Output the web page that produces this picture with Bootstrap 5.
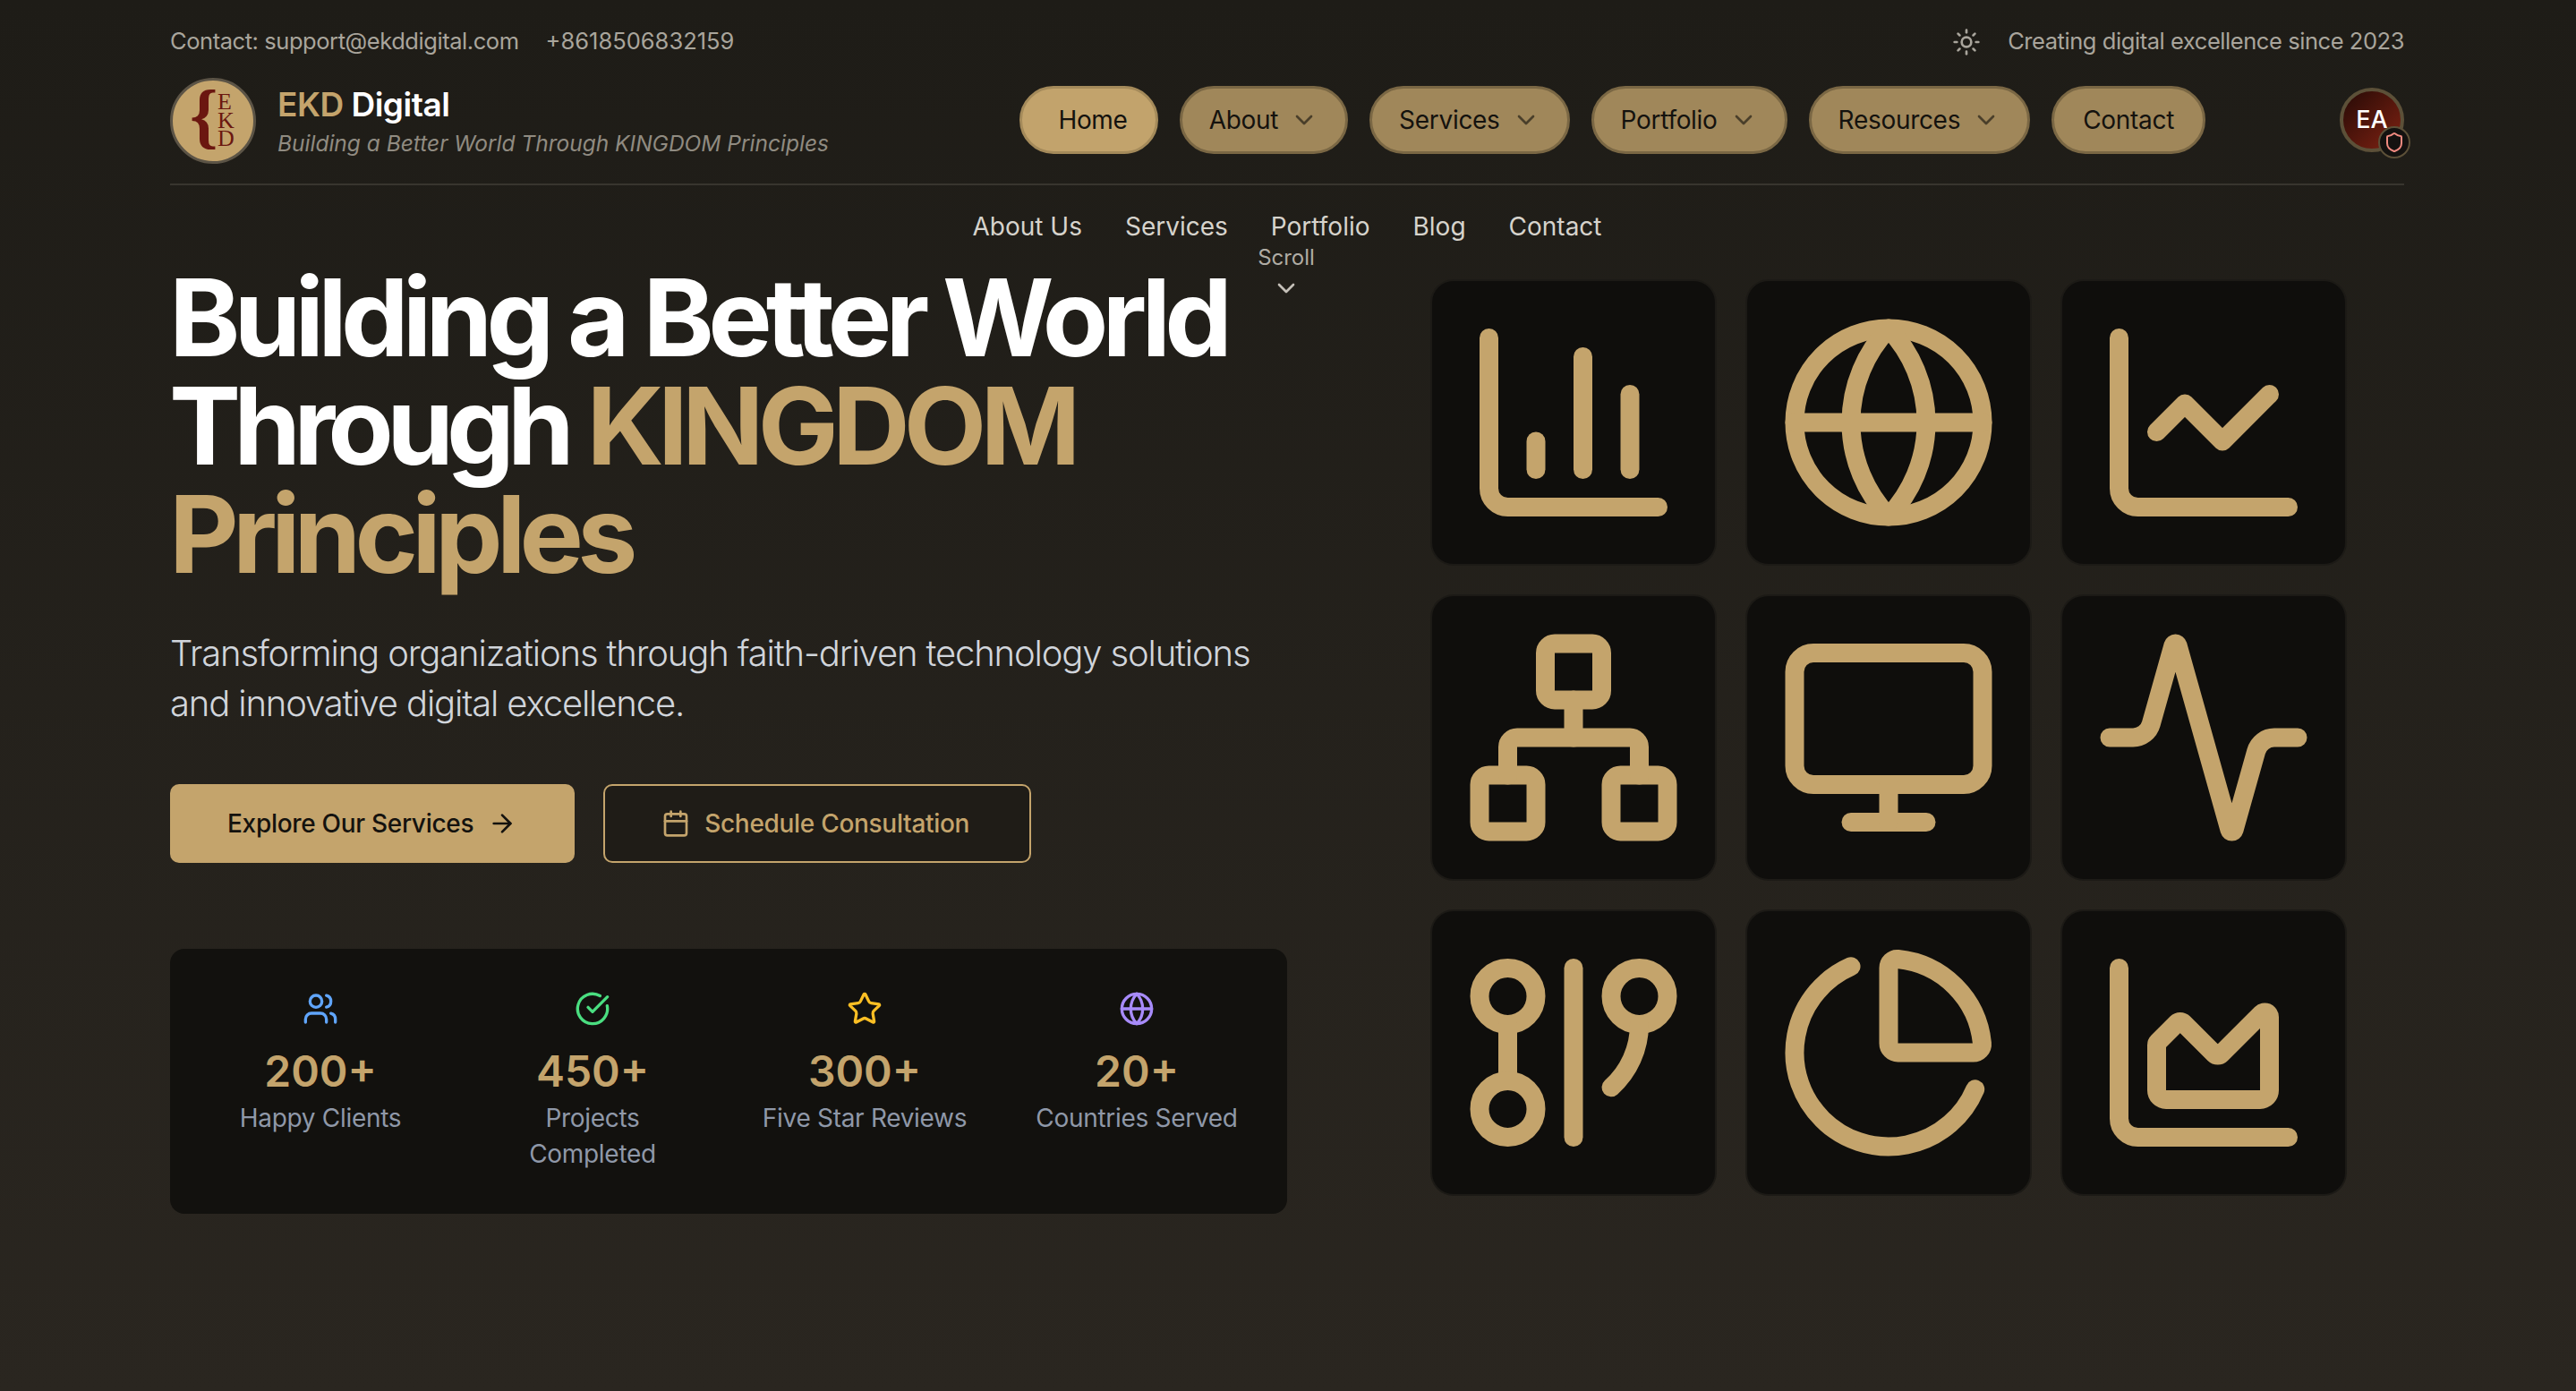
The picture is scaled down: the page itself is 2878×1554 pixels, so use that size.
<!DOCTYPE html>
<html lang="en">
<head>
  <meta charset="UTF-8" />
  <meta name="viewport" content="width=device-width, initial-scale=1.0"/>
  <title>EKD Digital</title>
  <link href="https://cdn.jsdelivr.net/npm/bootstrap@5.3.2/dist/css/bootstrap.min.css" rel="stylesheet"/>
  <style>
    body {
      font-family: Inter, "Liberation Sans", sans-serif;
      background: linear-gradient(180deg, #1e1c17 0%, #2a2620 100%);
      min-height: 1554px;
      color: #fff;
    }
    svg.ico {
      fill: none;
      stroke: currentColor;
      stroke-width: 2;
      stroke-linecap: round;
      stroke-linejoin: round;
      flex-shrink: 0;
    }
    .page-wrap { width: 2496px; margin-left: 190px; position: relative; }
    .top-strip { height: 87px; font-size: 25.5px; color: #a9a59c; padding-top: 6px; }
    .top-strip svg { width: 32px; height: 32px; margin-right: 30px; }
    .tight-txt { letter-spacing: -0.44px; }
    .top-phone { margin-left: 30px; }
    .head-row { height: 120px; border-bottom: 2px solid #38352e; padding-bottom: 24px; }
    .logo-disc { width: 96px; height: 96px; flex-shrink: 0; display: block; overflow: visible; }
    .brand-name { font-size: 37px; font-weight: 600; line-height: 46px; letter-spacing: -0.5px; padding-top: 2px; }
    .brand-name span, .gold-txt { color: #c4a46c; }
    .brand-sub { font-size: 24.5px; font-style: italic; color: #908b81; line-height: 36px; margin-top: 2px; }
    .pill-list { margin-left: auto; margin-right: 150px; margin-top: 9px; gap: 24px; }
    .pill-btn {
      height: 76px; padding: 0 30px; font-size: 28px; letter-spacing: -0.3px; color: #14120e;
      background: #a0875a; border: 3px solid #7a6744; border-radius: 38px; gap: 13px;
    }
    .pill-btn svg { width: 32px; height: 32px; color: #4a3f2a; }
    .pill-btn.is-on { background: #c2a36c; border-color: #a48a5a; padding: 0 31px 0 40px; }
    .pill-btn.pill-end { padding: 0 32px; }
    .avatar-disc {
      width: 72px; height: 72px; border-radius: 50%; border: 4px solid #5c5038; position: relative; margin-top: 11px;
      background: linear-gradient(135deg, #260a06, #7f2212); font-size: 27px; font-weight: 500;
    }
    .shield-dot {
      position: absolute; right: -11px; bottom: -11px; width: 36px; height: 36px; border-radius: 50%;
      background: #141210; border: 2px solid #5c5038; color: #f08a80;
    }
    .shield-dot svg { width: 24px; height: 24px; }
    .sub-links { padding: 26px 0 18px; gap: 48px; font-size: 28px; line-height: 40px; color: #d6d3cc; }
    .scroll-hint {
      position: absolute; left: 1247px; top: 273px; width: 0; font-size: 24px; line-height: 30px; color: #b0aca4;
    }
    .scroll-hint svg { width: 32px; height: 32px; color: #c4c0b8; margin-top: 3px; }
    .hero-row { align-items: center; }
    .hero-left { width: 1248px; }
    .hero-right { width: 1248px; padding-left: 96px; }
    .hero-title { font-size: 120px; line-height: 121px; font-weight: 700; letter-spacing: -6.8px; margin: 3px 0 0 -1px; }
    .word-tight { letter-spacing: -7.8px; }
    .hero-lead { font-size: 40px; line-height: 56px; color: #d1d5db; margin: 45px 0 0; font-weight: 300; letter-spacing: -1.15px; }
    .btn-row { gap: 32px; margin-top: 62px; }
    .cta-solid, .cta-line { height: 88px; font-size: 28px; font-weight: 500; letter-spacing: -0.3px; border-radius: 10px; gap: 16px; }
    .cta-solid { background: #c4a46c; color: #14120e; border: 0; padding: 0 65px 0 64px; }
    .cta-line { background: #1f1c17; color: #c4a46c; border: 2px solid #c4a46c; padding: 0 67px 0 63px; }
    .cta-solid svg { width: 32px; height: 32px; }
    .cta-line svg { width: 32px; height: 32px; }
    .stat-box { background: #12110e; border-radius: 16px; padding: 47px 32px 47px; margin-top: 96px; gap: 32px; }
    .stat-cell { width: 272px; text-align: center; }
    .stat-cell svg { width: 40px; height: 40px; display: block; margin: 0 auto 18px; }
    .stat-num { font-size: 48px; line-height: 64px; font-weight: 600; color: #c4a46c; }
    .stat-lbl { font-size: 28px; line-height: 40px; color: #8f98a8; letter-spacing: -0.3px; }
    .c-blue { color: #60a5fa; } .c-green { color: #4ade80; } .c-yellow { color: #fbbf24; } .c-purple { color: #a78bfa; }
    .icon-grid { display: grid; grid-template-columns: repeat(3, 316px); gap: 36px; }
    .icon-tile { width: 316px; height: 316px; padding: 32px; background: #0f0e0c; border-radius: 24px; color: #c4a46c; box-shadow: 0 0 0 2px #1c1a16; }
    .icon-tile svg { width: 252px; height: 252px; display: block; }
  </style>
</head>
<body>

<div class="page-wrap">
  <div class="top-strip d-flex justify-content-between align-items-center">
    <div><span class="tight-txt">Contact: support@ekddigital.com</span><span class="top-phone">+8618506832159</span></div>
    <div class="d-flex align-items-center">
      <svg class="ico" viewBox="0 0 24 24"><circle cx="12" cy="12" r="4"/><path d="M12 2v2"/><path d="M12 20v2"/><path d="m4.93 4.93 1.41 1.41"/><path d="m17.66 17.66 1.41 1.41"/><path d="M2 12h2"/><path d="M20 12h2"/><path d="m6.34 17.66-1.41 1.41"/><path d="m19.07 4.93-1.41 1.41"/></svg>
      <span class="tight-txt">Creating digital excellence since 2023</span>
    </div>
  </div>

  <div class="head-row d-flex align-items-start">
    <div class="d-flex align-items-center gap-4">
      <svg class="logo-disc" viewBox="0 0 96 96">
        <circle cx="48" cy="48" r="46.5" fill="#c4a46c" stroke="#5c5446" stroke-width="3"/>
        <text x="22" y="69" font-family="Liberation Serif" font-size="80" font-weight="700" fill="#6b1710">{</text>
        <text x="53" y="35" font-family="Liberation Serif" font-size="26" fill="#6b1710">E</text>
        <text x="53" y="56" font-family="Liberation Serif" font-size="26" fill="#6b1710">K</text>
        <text x="53" y="76" font-family="Liberation Serif" font-size="26" fill="#6b1710">D</text>
      </svg>
      <div>
        <div class="brand-name"><span>EKD</span> Digital</div>
        <div class="brand-sub">Building a Better World Through KINGDOM Principles</div>
      </div>
    </div>

    <div class="pill-list d-flex">
      <a class="pill-btn is-on d-flex align-items-center text-decoration-none">Home</a>
      <a class="pill-btn d-flex align-items-center text-decoration-none">About <svg class="ico" viewBox="0 0 24 24"><path d="m6 9 6 6 6-6"/></svg></a>
      <a class="pill-btn d-flex align-items-center text-decoration-none">Services <svg class="ico" viewBox="0 0 24 24"><path d="m6 9 6 6 6-6"/></svg></a>
      <a class="pill-btn d-flex align-items-center text-decoration-none">Portfolio <svg class="ico" viewBox="0 0 24 24"><path d="m6 9 6 6 6-6"/></svg></a>
      <a class="pill-btn d-flex align-items-center text-decoration-none">Resources <svg class="ico" viewBox="0 0 24 24"><path d="m6 9 6 6 6-6"/></svg></a>
      <a class="pill-btn pill-end d-flex align-items-center text-decoration-none">Contact</a>
    </div>

    <div class="avatar-disc d-flex align-items-center justify-content-center">
      EA
      <div class="shield-dot d-flex align-items-center justify-content-center">
        <svg class="ico" viewBox="0 0 24 24"><path d="M20 13c0 5-3.5 7.5-7.66 8.95a1 1 0 0 1-.67-.01C7.5 20.5 4 18 4 13V6a1 1 0 0 1 1-1c2 0 4.5-1.2 6.24-2.72a1.17 1.17 0 0 1 1.52 0C14.51 3.81 17 5 19 5a1 1 0 0 1 1 1z"/></svg>
      </div>
    </div>
  </div>

  <div class="sub-links d-flex justify-content-center">
    <span>About Us</span><span>Services</span><span>Portfolio</span><span>Blog</span><span>Contact</span>
  </div>

  <div class="scroll-hint d-flex flex-column align-items-center">
    <span>Scroll</span>
    <svg class="ico" viewBox="0 0 24 24"><path d="m6 9 6 6 6-6"/></svg>
  </div>

  <div class="hero-row d-flex">
    <div class="hero-left">
      <h1 class="hero-title">Building a Better World <span class="word-tight">Through</span> <span class="gold-txt">KINGDOM Principles</span></h1>
      <p class="hero-lead">Transforming organizations through faith-driven technology solutions and innovative digital excellence.</p>
      <div class="btn-row d-flex">
        <button class="btn cta-solid d-flex align-items-center">Explore Our Services
          <svg class="ico" viewBox="0 0 24 24"><path d="M5 12h14"/><path d="m12 5 7 7-7 7"/></svg>
        </button>
        <button class="btn cta-line d-flex align-items-center">
          <svg class="ico" viewBox="0 0 24 24"><path d="M8 2v4"/><path d="M16 2v4"/><rect width="18" height="18" x="3" y="4" rx="2"/><path d="M3 10h18"/></svg>
          Schedule Consultation
        </button>
      </div>
      <div class="stat-box d-flex align-items-start">
        <div class="stat-cell">
          <svg class="ico c-blue" viewBox="0 0 24 24"><path d="M16 21v-2a4 4 0 0 0-4-4H6a4 4 0 0 0-4 4v2"/><circle cx="9" cy="7" r="4"/><path d="M22 21v-2a4 4 0 0 0-3-3.87"/><path d="M16 3.13a4 4 0 0 1 0 7.75"/></svg>
          <div class="stat-num">200+</div>
          <div class="stat-lbl">Happy Clients</div>
        </div>
        <div class="stat-cell">
          <svg class="ico c-green" viewBox="0 0 24 24"><path d="M21.801 10A10 10 0 1 1 17 3.335"/><path d="m9 11 3 3L22 4"/></svg>
          <div class="stat-num">450+</div>
          <div class="stat-lbl">Projects<br>Completed</div>
        </div>
        <div class="stat-cell">
          <svg class="ico c-yellow" viewBox="0 0 24 24"><path d="M11.525 2.295a.53.53 0 0 1 .95 0l2.31 4.679a2.123 2.123 0 0 0 1.595 1.16l5.166.756a.53.53 0 0 1 .294.904l-3.736 3.638a2.123 2.123 0 0 0-.611 1.878l.882 5.14a.53.53 0 0 1-.771.56l-4.618-2.428a2.122 2.122 0 0 0-1.973 0L6.396 21.01a.53.53 0 0 1-.77-.56l.881-5.139a2.122 2.122 0 0 0-.611-1.879L2.16 9.795a.53.53 0 0 1 .294-.906l5.165-.755a2.122 2.122 0 0 0 1.597-1.16z"/></svg>
          <div class="stat-num">300+</div>
          <div class="stat-lbl">Five Star Reviews</div>
        </div>
        <div class="stat-cell">
          <svg class="ico c-purple" viewBox="0 0 24 24"><circle cx="12" cy="12" r="10"/><path d="M12 2a14.5 14.5 0 0 0 0 20 14.5 14.5 0 0 0 0-20"/><path d="M2 12h20"/></svg>
          <div class="stat-num">20+</div>
          <div class="stat-lbl">Countries Served</div>
        </div>
      </div>
    </div>

    <div class="hero-right d-flex justify-content-center">
      <div class="icon-grid">
        <div class="icon-tile"><svg class="ico" viewBox="0 0 24 24"><path d="M3 3v16a2 2 0 0 0 2 2h16"/><path d="M18 17V9"/><path d="M13 17V5"/><path d="M8 17v-3"/></svg></div>
        <div class="icon-tile"><svg class="ico" viewBox="0 0 24 24"><circle cx="12" cy="12" r="10"/><path d="M12 2a14.5 14.5 0 0 0 0 20 14.5 14.5 0 0 0 0-20"/><path d="M2 12h20"/></svg></div>
        <div class="icon-tile"><svg class="ico" viewBox="0 0 24 24"><path d="M3 3v16a2 2 0 0 0 2 2h16"/><path d="m19 9-5 5-4-4-3 3"/></svg></div>
        <div class="icon-tile"><svg class="ico" viewBox="0 0 24 24"><rect x="16" y="16" width="6" height="6" rx="1"/><rect x="2" y="16" width="6" height="6" rx="1"/><rect x="9" y="2" width="6" height="6" rx="1"/><path d="M5 16v-3a1 1 0 0 1 1-1h12a1 1 0 0 1 1 1v3"/><path d="M12 12V8"/></svg></div>
        <div class="icon-tile"><svg class="ico" viewBox="0 0 24 24"><rect width="20" height="14" x="2" y="3" rx="2"/><line x1="8" x2="16" y1="21" y2="21"/><line x1="12" x2="12" y1="17" y2="21"/></svg></div>
        <div class="icon-tile"><svg class="ico" viewBox="0 0 24 24"><path d="M22 12h-2.48a2 2 0 0 0-1.93 1.46l-2.35 8.36a.25.25 0 0 1-.48 0L9.24 2.18a.25.25 0 0 0-.48 0l-2.35 8.36A2 2 0 0 1 4.49 12H2"/></svg></div>
        <div class="icon-tile"><svg class="ico" viewBox="0 0 24 24"><circle cx="5" cy="6" r="3"/><path d="M5 9v6"/><circle cx="5" cy="18" r="3"/><path d="M12 3v18"/><circle cx="19" cy="6" r="3"/><path d="M16 15.7A9 9 0 0 0 19 9"/></svg></div>
        <div class="icon-tile"><svg class="ico" viewBox="0 0 24 24"><path d="M21 12c.552 0 1.005-.449.95-.998a10 10 0 0 0-8.953-8.951c-.55-.055-.998.398-.998.95v8a1 1 0 0 0 1 1z"/><path d="M21.21 15.89A10 10 0 1 1 8 2.83"/></svg></div>
        <div class="icon-tile"><svg class="ico" viewBox="0 0 24 24"><path d="M3 3v16a2 2 0 0 0 2 2h16"/><path d="M7 11.207a.5.5 0 0 1 .146-.353l2-2a.5.5 0 0 1 .708 0l3.292 3.292a.5.5 0 0 0 .708 0l4.292-4.292a.5.5 0 0 1 .854.353V16a1 1 0 0 1-1 1H8a1 1 0 0 1-1-1z"/></svg></div>
      </div>
    </div>
  </div>
</div>

<script src="https://cdn.jsdelivr.net/npm/bootstrap@5.3.2/dist/js/bootstrap.bundle.min.js"></script>
</body>
</html>
